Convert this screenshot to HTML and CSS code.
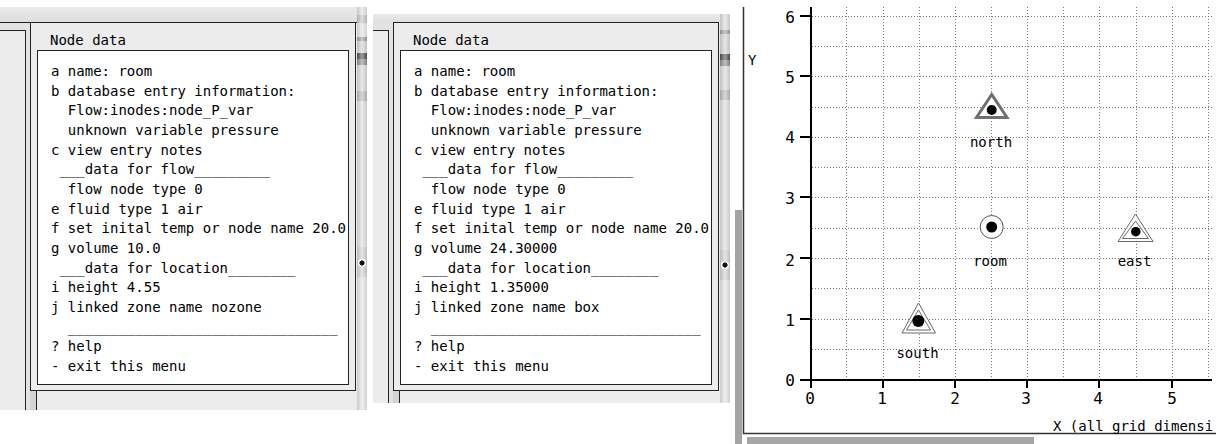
FILE: index.html
```html
<!DOCTYPE html>
<html>
<head>
<meta charset="utf-8">
<title>Node data</title>
<link rel="stylesheet" href="styles.css">
</head>
<body>
<div class="win win-a">
  <div class="win-title"></div>
  <div class="win-body">
    <div class="gutter"><div class="gutter-frame"></div></div>
    <div class="main">
      <div class="dialog">
        <div class="dlg-title">Node data</div>
        <pre class="dlg-box">a name: room
b database entry information:
  Flow:inodes:node_P_var
  unknown variable pressure
c view entry notes
 ___data for flow_________
  flow node type 0
e fluid type 1 air
f set inital temp or node name 20.0
g volume 10.0
 ___data for location________
i height 4.55
j linked zone name nozone
  ________________________________
? help
- exit this menu</pre>
      </div>
      <div class="under"><div class="under-l"></div></div>
    </div>
  </div>
</div>
<div class="strip strip-a"></div>
<div class="win win-b">
  <div class="win-title"></div>
  <div class="win-body">
    <div class="gutter"><div class="gutter-frame"></div></div>
    <div class="main">
      <div class="dialog">
        <div class="dlg-title">Node data</div>
        <pre class="dlg-box">a name: room
b database entry information:
  Flow:inodes:node_P_var
  unknown variable pressure
c view entry notes
 ___data for flow_________
  flow node type 0
e fluid type 1 air
f set inital temp or node name 20.0
g volume 24.30000
 ___data for location________
i height 1.35000
j linked zone name box
  ________________________________
? help
- exit this menu</pre>
      </div>
      <div class="under"><div class="under-l"></div></div>
    </div>
  </div>
</div>
<div class="strip strip-b"></div>
<div class="plot">
  <svg width="481" height="444" viewBox="0 0 481 444">
    <rect x="0" y="210" width="7" height="234" fill="#a3a3a3"/>
    <path d="M8.5 7 V433.5 H481" fill="none" stroke="#333" stroke-width="1.5"/>
    <rect x="12" y="437" width="287" height="7" fill="#a6a6a6"/>
    <text class="lbl" x="13" y="65">Y</text>

    <g stroke="#7a7a7a" stroke-width="1" stroke-dasharray="1 2" fill="none">
      <path d="M77 16.5 H477 M77 46.5 H477 M77 76.5 H477 M77 107.5 H477 M77 137.5 H477 M77 167.5 H477 M77 197.5 H477 M77 228.5 H477 M77 258.5 H477 M77 288.5 H477 M77 319.5 H477 M77 349.5 H477"/>
      <path d="M111.5 7 V379 M148.5 7 V379 M184.5 7 V379 M220.5 7 V379 M256.5 7 V379 M292.5 7 V379 M328.5 7 V379 M364.5 7 V379 M401.5 7 V379 M437.5 7 V379 M473.5 7 V379"/>
    </g>

    <g stroke="#000" stroke-width="2" fill="none">
      <path d="M76 7 V381"/>
      <path d="M65 380 H477"/>
      <path d="M65 16 H76 M65 76 H76 M65 137 H76 M65 197 H76 M65 258 H76 M65 319 H76"/>
      <path d="M76 380 V388 M148 380 V388 M220 380 V388 M292 380 V388 M364 380 V388 M437 380 V388"/>
    </g>

    <g class="ax" text-anchor="end">
      <text x="60" y="23">6</text>
      <text x="60" y="83">5</text>
      <text x="60" y="143">4</text>
      <text x="60" y="204">3</text>
      <text x="60" y="266">2</text>
      <text x="60" y="326">1</text>
      <text x="60" y="386">0</text>
    </g>
    <g class="ax" text-anchor="middle">
      <text x="75" y="404">0</text>
      <text x="147" y="404">1</text>
      <text x="220" y="404">2</text>
      <text x="291" y="404">3</text>
      <text x="363" y="404">4</text>
      <text x="437" y="404">5</text>
    </g>
    <text class="lbl" x="318" y="431">X (all grid dimensi</text>

    <!-- north -->
    <path d="M256.7 94.5 L241.5 117.5 L272 117.5 Z" fill="#fff" stroke="#707070" stroke-width="3"/>
    <circle cx="256.7" cy="110" r="5" fill="#000"/>
    <text class="lbl" x="256" y="147" text-anchor="middle">north</text>

    <!-- room -->
    <circle cx="256.7" cy="227" r="11.5" fill="#fff" stroke="#555" stroke-width="1"/>
    <circle cx="256.7" cy="227" r="5.5" fill="#000"/>
    <text class="lbl" x="255" y="266" text-anchor="middle">room</text>

    <!-- east -->
    <path d="M400.5 214 L383 241.5 L418 241.5 Z" fill="#fff" stroke="#6a6a6a" stroke-width="1"/>
    <path d="M400.5 221 L387.5 238.5 L413.5 238.5 Z" fill="none" stroke="#6a6a6a" stroke-width="1"/>
    <circle cx="400.8" cy="231.7" r="4.8" fill="#000"/>
    <text class="lbl" x="399.5" y="266" text-anchor="middle">east</text>

    <!-- south -->
    <path d="M183.5 303 L167 333 L200.5 333 Z" fill="#fff" stroke="#6a6a6a" stroke-width="1"/>
    <path d="M183.5 310 L171.5 330 L195.5 330 Z" fill="none" stroke="#6a6a6a" stroke-width="1"/>
    <circle cx="183.3" cy="321" r="6" fill="#000"/>
    <text class="lbl" x="182.5" y="358" text-anchor="middle">south</text>
  </svg>
</div>
</body>
</html>
```

FILE: styles.css
```css
* {
  box-sizing: border-box;
}

html,
body {
  margin: 0;
  padding: 0;
}

body {
  width: 1216px;
  height: 444px;
  overflow: hidden;
  background: #fff;
  display: flex;
  align-items: flex-start;
  font-family: "DejaVu Sans Mono", monospace;
  font-size: 14px;
  color: #000;
}

/* dialog windows */
.win {
  flex: none;
  display: flex;
  flex-direction: column;
  background: #ececec;
}

.win-a {
  width: 357px;
  height: 403px;
  margin-top: 7px;
}

.win-b {
  width: 347px;
  height: 389px;
  margin-top: 14px;
  margin-left: 6px;
}

.win-title {
  flex: none;
  background: linear-gradient(#eaeaea, #dedede);
}

.win-a .win-title {
  height: 16px;
  border-bottom: 1px solid #222;
}

.win-b .win-title {
  height: 8px;
}

.win-body {
  flex: 1;
  display: flex;
  min-height: 0;
}

.gutter {
  flex: none;
  display: flex;
  flex-direction: column;
  background: #e2e2e2;
}

.win-a .gutter {
  width: 30px;
}

.win-b .gutter {
  width: 20px;
}

.gutter-frame {
  flex: 1;
  background: #ececec;
  border-top: 1px solid #222;
  border-right: 1px solid #222;
}

.win-a .gutter-frame {
  width: 26px;
  margin-top: 7px;
}

.win-b .gutter-frame {
  width: 16px;
  margin-top: 8px;
}

.main {
  flex: none;
  width: 326px;
  display: flex;
  flex-direction: column;
}

.dialog {
  flex: none;
  background: #ececec;
  border: 1px solid #222;
  padding: 7px 6px 5px;
}

.win-a .dialog {
  border-top: 0;
  height: 368px;
}

.win-b .dialog {
  height: 369px;
}

.dlg-title {
  height: 20px;
  line-height: 20px;
  padding-left: 13px;
  white-space: pre;
}

.dlg-box {
  margin: 0;
  height: 335px;
  background: #fff;
  border: 1px solid #222;
  padding: 11px 0 0 13px;
  font: inherit;
  line-height: 19.67px;
  white-space: pre;
  overflow: visible;
}

.under {
  flex: 1;
  display: flex;
  background: #ececec;
}

.under-l {
  width: 7px;
  background: #d4d4d4;
  border-right: 1px solid #222;
}

/* slivers of the windows behind */
.strip {
  flex: none;
  width: 10px;
}

.strip-a {
  height: 403px;
  margin-top: 7px;
  background:
    radial-gradient(circle at 5px 256px, #111 0 2.5px, #f4f4f4 2.6px 4px, transparent 4.5px),
    linear-gradient(to right, rgba(0, 0, 0, 0.10), rgba(255, 255, 255, 0.45) 50%, rgba(0, 0, 0, 0.08)),
    linear-gradient(to bottom, #dedede 0 8px, #c2c2c2 8px 16px, #e4e4e4 16px 30px, #9c9c9c 30px 34px, #d2d2d2 34px 46px, #4e4e4e 46px 52px, #8c8c8c 52px 58px, #d6d6d6 58px 84px, #b8b8b8 84px 94px, #dcdcdc 94px 240px, #cfcfcf 240px 270px, #e2e2e2 270px);
}

.strip-b {
  height: 389px;
  margin-top: 14px;
  background:
    radial-gradient(circle at 5px 251px, #111 0 2.5px, #f4f4f4 2.6px 4px, transparent 4.5px),
    linear-gradient(to right, rgba(0, 0, 0, 0.10), rgba(255, 255, 255, 0.45) 50%, rgba(0, 0, 0, 0.08)),
    linear-gradient(to bottom, #d8d8d8 0 16px, #9c9c9c 16px 20px, #d2d2d2 20px 40px, #4e4e4e 40px 46px, #8c8c8c 46px 52px, #d6d6d6 52px 76px, #b8b8b8 76px 86px, #dcdcdc 86px 236px, #cfcfcf 236px 266px, #e2e2e2 266px);
}

/* plot */
.plot {
  flex: none;
  width: 481px;
  height: 444px;
  margin-left: 5px;
}

.plot svg {
  display: block;
}

.lbl {
  font-family: "DejaVu Sans Mono", monospace;
  font-size: 14px;
  fill: #000;
}

.ax {
  font-family: "DejaVu Sans Mono", monospace;
  font-size: 16px;
  fill: #000;
}
```
